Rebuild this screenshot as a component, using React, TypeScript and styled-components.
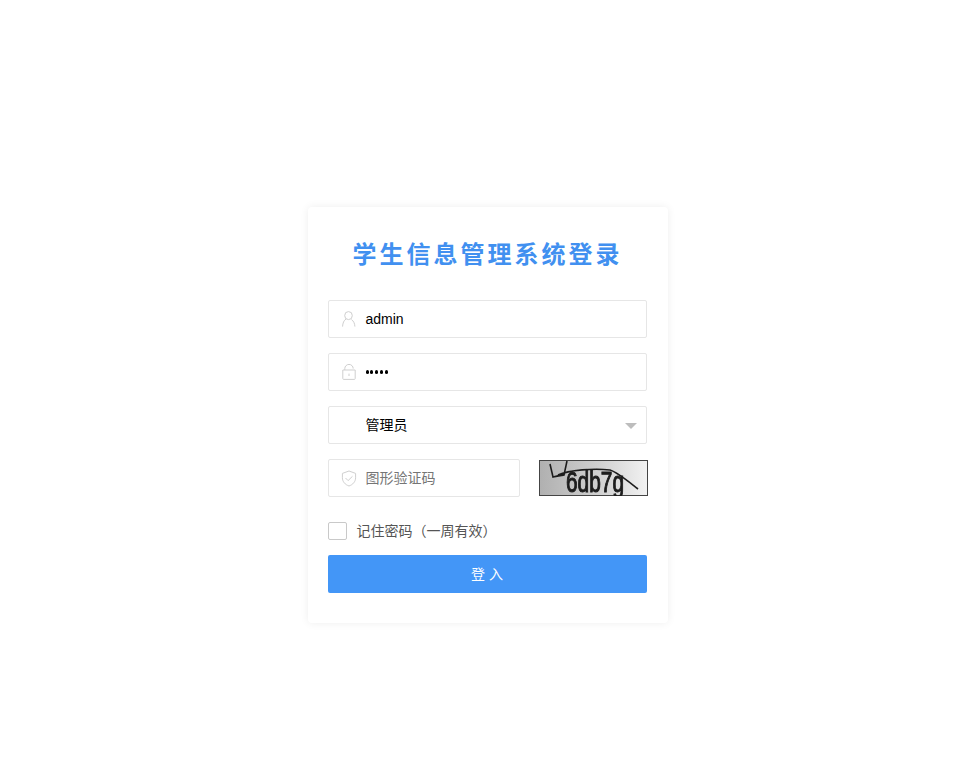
import React from "react";
import styled, { createGlobalStyle } from "styled-components";

const Global = createGlobalStyle`
  html, body { margin: 0; padding: 0; background: #fff; }
  * { box-sizing: border-box; }
  body { font-family: "Liberation Sans", "Noto Sans CJK SC", sans-serif; }
`;

const Page = styled.div`
  width: 100%;
  min-height: 767px;
  padding-top: 207px;
  display: flex;
  justify-content: center;
  align-items: flex-start;
`;

const Card = styled.form`
  width: 360px;
  height: 416px;
  padding: 0 20px;
  border-radius: 4px;
  background: #fff;
  box-shadow: 0 0 8px rgba(0, 0, 0, 0.07);
  display: flex;
  flex-direction: column;
`;

const Title = styled.h1`
  margin: 29px 0 30px;
  height: 34px;
  line-height: 34px;
  text-align: center;
  font-size: 24px;
  font-weight: 700;
  letter-spacing: 3px;
  color: #4190f0;
  font-family: "Noto Sans CJK SC", sans-serif;
`;

const Field = styled.div<{ $width?: number }>`
  width: ${(p) => p.$width ?? 319}px;
  height: 38px;
  border: 1px solid #e6e6e6;
  border-radius: 2px;
  background: #fff;
  display: flex;
  align-items: center;
  position: relative;
  flex: none;
`;

const FieldGroup = styled.div`
  margin-bottom: 15px;
`;

const IconSlot = styled.span`
  width: 37px;
  padding-left: 3px;
  flex: none;
  display: flex;
  justify-content: center;
  color: #cfcfcf;
`;

const Value = styled.span<{ $muted?: boolean }>`
  font-size: 14px;
  line-height: 36px;
  color: ${(p) => (p.$muted ? "#757575" : "#000")};
  font-family: "Liberation Sans", "Noto Sans CJK SC", sans-serif;
`;

const Dots = styled.span`
  display: flex;
  gap: 1.6px;
`;

const Dot = styled.i`
  width: 3.2px;
  height: 3.2px;
  border-radius: 50%;
  background: #000;
`;

const Caret = styled.span`
  position: absolute;
  right: 9px;
  top: 16px;
  width: 0;
  height: 0;
  border-left: 6px solid transparent;
  border-right: 6px solid transparent;
  border-top: 6px solid #bdbdbd;
`;

const CaptchaRow = styled.div`
  display: flex;
  align-items: center;
  justify-content: space-between;
  width: 320px;
  margin-bottom: 25px;
`;

const Captcha = styled.svg`
  display: block;
  width: 109px;
  height: 36px;
  flex: none;
`;

const Remember = styled.label`
  display: flex;
  align-items: center;
  gap: 10px;
  height: 18px;
  margin-bottom: 15px;
  font-size: 14px;
  color: #555;
  font-family: "Noto Sans CJK SC", sans-serif;
`;

const RememberText = styled.span`
  line-height: 16px;
  padding-bottom: 2px;
`;

const Box = styled.span`
  width: 19px;
  height: 18px;
  border: 1px solid #c9c9c9;
  border-radius: 2px;
  background: #fff;
  flex: none;
`;

const Submit = styled.button`
  width: 319px;
  height: 38px;
  border: 0;
  border-radius: 2px;
  background: #4396f7;
  color: #fff;
  font-size: 14px;
  letter-spacing: 4px;
  text-indent: 4px;
  font-family: "Noto Sans CJK SC", sans-serif;
  padding: 0 0 2px;
`;

const UserIcon = () => (
  <svg width="14" height="16" viewBox="0 0 14 16" fill="none" stroke="currentColor" strokeWidth="1">
    <ellipse cx="6.500" cy="4.600" rx="3.800" ry="4" />
    <path d="M3.800 8.200C1.800 9.500.800 11.800.600 15.200M9.800 8.800c1.800 1.300 2.900 3.400 3.100 6.400" strokeLinecap="round" />
  </svg>
);

const LockIcon = () => (
  <svg width="14" height="16" viewBox="0 0 14 16" fill="none" stroke="currentColor" strokeWidth="1">
    <path d="M2.800 6V4.600a4.200 4.200 0 0 1 8.400 0" />
    <path d="M.800 6h12.400v8.600a.8.800 0 0 1-.8.8H1.600a.8.800 0 0 1-.8-.8zM7 9.600v2.400" />
  </svg>
);

const ShieldIcon = () => (
  <svg width="16" height="17" viewBox="0 0 16 17" fill="none" stroke="currentColor" strokeWidth="1">
    <path d="M8 1l6.600 2.400v4.400c0 3.800-2.800 6.900-6.600 8.200C4.200 14.700 1.400 11.600 1.400 7.800V3.400z" strokeLinejoin="round" />
    <path d="M4.800 8.300l2.300 2.300 4.100-4" strokeLinecap="round" strokeLinejoin="round" />
  </svg>
);

const CaptchaImage = () => (
  <Captcha viewBox="0 0 109 36">
    <defs>
      <linearGradient id="captchaBg" x1="0" x2="1" y1="0" y2="0">
        <stop offset="0" stopColor="#b0b0b0" />
        <stop offset="0.55" stopColor="#d0d0d0" />
        <stop offset="1" stopColor="#f2f2f2" />
      </linearGradient>
      <filter id="captchaBlur">
        <feGaussianBlur stdDeviation="0.4" />
      </filter>
    </defs>
    <rect x="0.500" y="0.500" width="108" height="35" fill="url(#captchaBg)" stroke="#444" />
    <g filter="url(#captchaBlur)">
      <text
        x="27"
        y="32"
        fontFamily="'Liberation Sans', sans-serif"
        fontSize="30"
        fill="#1c1c1c"
        stroke="#1c1c1c"
        strokeWidth="1.100"
        textLength="58"
        lengthAdjust="spacingAndGlyphs"
      >
        6db7g
      </text>
      <path
        d="M11 4 L14 17 L26 14 M28 1 L25 15 L14 17 M19 15 C30 10 55 8 71 10 C78 12 85 18 99 29"
        fill="none"
        stroke="#1e1e1e"
        strokeWidth="1.600"
      />
    </g>
  </Captcha>
);

export default function App() {
  return (
    <>
      <Global />
      <Page>
        <Card>
          <Title>学生信息管理系统登录</Title>
          <FieldGroup>
            <Field>
              <IconSlot><UserIcon /></IconSlot>
              <Value>admin</Value>
            </Field>
          </FieldGroup>
          <FieldGroup>
            <Field>
              <IconSlot><LockIcon /></IconSlot>
              <Dots>
                <Dot /><Dot /><Dot /><Dot /><Dot />
              </Dots>
            </Field>
          </FieldGroup>
          <FieldGroup>
            <Field>
              <IconSlot />
              <Value>管理员</Value>
              <Caret />
            </Field>
          </FieldGroup>
          <CaptchaRow>
            <Field $width={192}>
              <IconSlot><ShieldIcon /></IconSlot>
              <Value $muted>图形验证码</Value>
            </Field>
            <CaptchaImage />
          </CaptchaRow>
          <Remember>
            <Box />
            <RememberText>记住密码（一周有效）</RememberText>
          </Remember>
          <Submit type="button">登入</Submit>
        </Card>
      </Page>
    </>
  );
}
